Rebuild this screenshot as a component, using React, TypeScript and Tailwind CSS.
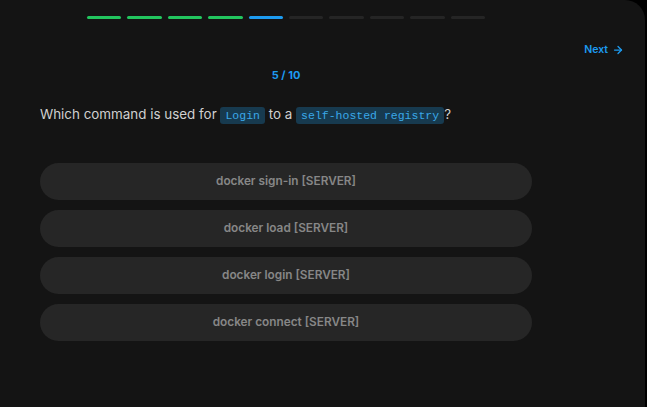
import { ArrowRight } from 'lucide-react'

const steps = ['done', 'done', 'done', 'done', 'current', 'todo', 'todo', 'todo', 'todo', 'todo']

const answers = [
  'docker sign-in [SERVER]',
  'docker load [SERVER]',
  'docker login [SERVER]',
  'docker connect [SERVER]',
]

function Code({ children }: { children: string }) {
  return (
    <code className="rounded-[3px] bg-[#173a4f] px-[5px] py-[2px] font-['Liberation_Mono',monospace] text-[11.5px] text-[#3aa8e8]">
      {children}
    </code>
  )
}

export default function App() {
  return (
    <div className="h-[407px] w-[647px] bg-black font-['Inter',sans-serif]">
      <div className="h-full w-[645px] rounded-tr-[20px] bg-[#141414]">
        <div className="w-[572px] px-10">
          {/* Progress */}
          <div className="mx-auto flex h-[19px] w-[398px] items-end gap-[6px]">
            {steps.map((s, i) => (
              <div
                key={i}
                className={
                  s === 'done'
                    ? 'h-[3px] flex-1 rounded-full bg-[#22c55e]'
                    : s === 'current'
                      ? 'h-[3px] flex-1 rounded-full bg-[#1d9bf0]'
                      : 'h-[3px] flex-1 rounded-full bg-[#252525]'
                }
              />
            ))}
          </div>
        </div>

        {/* Next */}
        <div className="mt-[23px] flex justify-end pr-[21px]">
          <button className="flex items-center gap-1 text-[10.5px] font-semibold text-[#1d9bf0]">
            Next
            <ArrowRight className="h-3 w-3" strokeWidth={2.5} />
          </button>
        </div>

        <div className="w-[572px] px-10">
          <p className="mt-[9px] text-center text-[11px] font-bold text-[#1d9bf0]">5 / 10</p>

          <p className="mt-[21px] text-[13.4px] leading-[21px] text-[#d0d0d0]">
            Which command is used for <Code>Login</Code> to a <Code>self-hosted registry</Code>?
          </p>

          <div className="mt-[37px] flex flex-col gap-[10px]">
            {answers.map((a) => (
              <button
                key={a}
                className="h-[37px] w-full rounded-full bg-[#262626] text-[11.8px] font-semibold text-[#878787]"
              >
                {a}
              </button>
            ))}
          </div>
        </div>
      </div>
    </div>
  )
}
